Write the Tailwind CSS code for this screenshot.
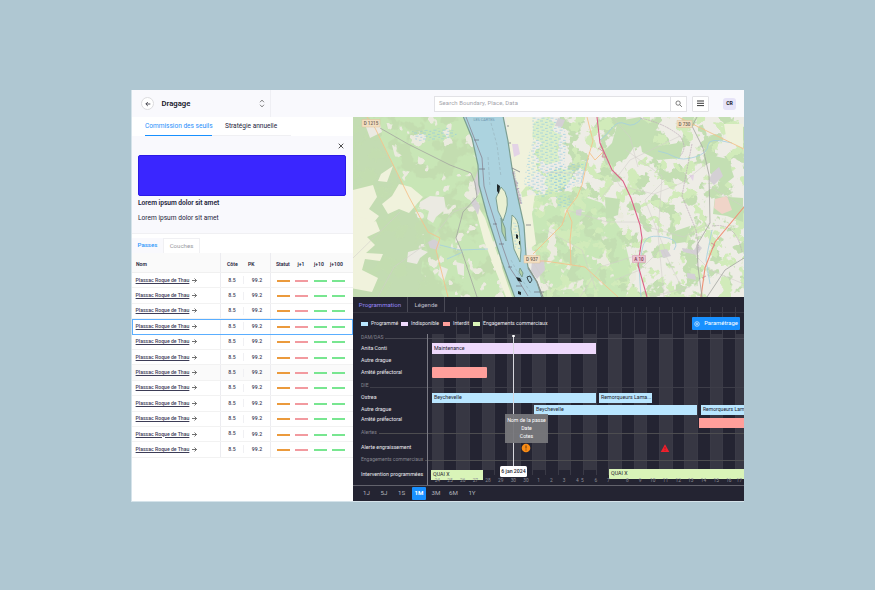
<!DOCTYPE html>
<html lang="fr">
<head>
<meta charset="utf-8">
<title>Dragage</title>
<script src="https://cdn.jsdelivr.net/npm/@tailwindcss/browser@4"></script>
</head>
<body class="w-[875px] h-[590px] overflow-hidden bg-[#afc7d2] pl-[131px] pt-[90px] font-['Roboto','Liberation_Sans',sans-serif] text-[6px] leading-none text-[#23233b]">
<div class="w-[613px] h-[412px] flex flex-col bg-white border-l border-b border-[#d5e3ea] overflow-hidden whitespace-nowrap">
  <header class="h-[27px] shrink-0 bg-[#f9f9fd] flex items-center">
    <div class="w-[139px] h-full flex items-center border-r border-[#efeff4] pl-[9px]">
      <div class="size-[13px] rounded-full border border-[#dcdcdf] bg-white flex items-center justify-center">
        <svg class="size-[6px]" viewBox="0 0 7 7" fill="none" stroke="#33333f" stroke-width="1"><path d="M6.2 3.5H1M3.3 1.2 1 3.5l2.3 2.3"/></svg>
      </div>
      <h1 class="ml-[7.5px] text-[7.7px] font-semibold text-[#17172b]">Dragage</h1>
      <svg class="ml-auto mr-[5px] w-[6px] h-[9px]" viewBox="0 0 6 10" fill="none" stroke="#666" stroke-width="0.9"><path d="M.8 3.6 3 1.2l2.2 2.4M.8 6.4 3 8.8l2.2-2.4"/></svg>
    </div>
    <div class="ml-[163px] w-[253px] h-[16px] flex border border-[#e2e2e6] bg-white items-center">
      <span class="flex-1 pl-[4px] text-[5.9px] text-[#a3a3aa] tracking-[0.1px]">Search Boundary, Place, Data</span>
      <div class="w-[16px] h-full border-l border-[#e2e2e6] flex items-center justify-center">
        <svg class="size-[7.5px]" viewBox="0 0 8 8" fill="none" stroke="#555" stroke-width="0.8"><circle cx="3.3" cy="3.3" r="2.3"/><path d="m5 5 2.4 2.4"/></svg>
      </div>
    </div>
    <div class="ml-[5px] w-[17px] h-[16px] border border-[#e2e2e6] rounded-[1px] bg-white flex items-center justify-center">
      <svg class="w-[7px] h-[7px]" viewBox="0 0 7 7" stroke="#222" stroke-width="0.9"><path d="M0 1h7M0 3.3h7M0 5.6h7"/></svg>
    </div>
    <div class="ml-[14px] w-[13px] h-[12px] rounded-[3px] bg-[#e6e3f8] flex items-center justify-center text-[5.2px] font-bold text-[#17172b]">CR</div>
  </header>

  <div class="flex flex-1 min-h-0">
    <aside class="w-[221px] shrink-0 flex flex-col">
      <nav class="h-[19px] shrink-0 flex pl-[13px] text-[6.55px]">
        <div class="w-[67px] border-b border-[#1890ff] text-[#1f8ffb] flex items-center">Commission des seuils</div>
        <div class="w-[79px] pl-[13px] border-b border-[#f0f0f3] flex items-center">Stratégie annuelle</div>
      </nav>
      <section class="h-[98px] shrink-0 bg-[#f9f9fd] px-[6px] pt-[7px] border-b border-[#f0f0f3]">
        <div class="flex justify-end pr-[3px]">
          <svg class="size-[6px]" viewBox="0 0 6 6" stroke="#222" stroke-width="0.8"><path d="m.7.7 4.6 4.6M5.3.7.7 5.3"/></svg>
        </div>
        <div class="mt-[6px] w-[208px] h-[41px] rounded-[2px] bg-[#3a26ff] border border-[#2b19e6]"></div>
        <p class="mt-[4px] text-[6.7px] font-semibold tracking-[-0.05px]">Lorem ipsum dolor sit amet</p>
        <p class="mt-[8px] text-[6.6px]">Lorem ipsum dolor sit amet</p>
      </section>
      <nav class="mt-[4px] h-[15px] shrink-0 flex text-[6.1px]">
        <div class="w-[31px] bg-[#f9f9fd] flex items-center justify-center font-medium text-[#2c97fb]">Passes</div>
        <div class="w-[37px] border border-b-0 border-[#f0f0f3] flex items-center justify-center text-[#98989e]">Couches</div>
      </nav>
      <div class="h-[20px] shrink-0 flex bg-[#fafafa] border-b border-[#f0f0f0] text-[5.1px] font-semibold">
        <div class="w-[89px] border-r border-[#ececf0] pl-[4px] pt-[9px]">Nom</div>
        <div class="w-[50px] border-r border-[#ececf0] flex pt-[9px]"><span class="w-[22px] pl-[6px]">Côte</span><span class="pl-[5px]">PK</span></div>
        <div class="flex-1 flex pt-[9px] pl-[5px]"><span class="w-[21.5px]">Statut</span><span class="w-[16.5px]">j+1</span><span class="w-[16px]">j+10</span><span>j+100</span></div>
      </div>
      <div id="rows"></div>
    </aside>

    <main class="flex-1 flex flex-col min-w-0">
      <svg class="w-full h-[180px] shrink-0 block" viewBox="353 117 391 180" preserveAspectRatio="none" fill="none">
        <defs>
          <filter id="westwood" x="0" y="0" width="100%" height="100%" color-interpolation-filters="sRGB"><feTurbulence type="fractalNoise" baseFrequency="0.05" numOctaves="4" seed="12"/><feColorMatrix values="0 0 0 0 .765  0 0 0 0 .867  0 0 0 0 .69  14 0 0 0 -7.300"/><feComposite in2="SourceGraphic" operator="in"/></filter>
          <filter id="forest" x="0" y="0" width="100%" height="100%" color-interpolation-filters="sRGB"><feTurbulence type="fractalNoise" baseFrequency="0.06" numOctaves="4" seed="7"/><feColorMatrix values="0 0 0 0 .765  0 0 0 0 .87  0 0 0 0 .70  20 0 0 0 -10.900"/><feComposite in2="SourceGraphic" operator="in"/></filter>
          <filter id="meadow" x="0" y="0" width="100%" height="100%" color-interpolation-filters="sRGB"><feTurbulence type="fractalNoise" baseFrequency="0.075" numOctaves="4" seed="21"/><feColorMatrix values="0 0 0 0 .82  0 0 0 0 .92  0 0 0 0 .73  20 0 0 0 -11.400"/><feComposite in2="SourceGraphic" operator="in"/></filter>
          <filter id="clearing" x="0" y="0" width="100%" height="100%" color-interpolation-filters="sRGB"><feTurbulence type="fractalNoise" baseFrequency="0.075" numOctaves="3" seed="4"/><feColorMatrix values="0 0 0 0 .92  0 0 0 0 .92  0 0 0 0 .875  20 0 0 0 -12.600"/><feComposite in2="SourceGraphic" operator="in"/></filter>
          <pattern id="marsh" width="9" height="6" patternUnits="userSpaceOnUse"><path d="M0 1h3M5 2.4h2.6M1.5 4.2h3M6.3 5.3h2" stroke="#8cc6e2" stroke-width=".6"/></pattern>
        </defs>
        <path fill="#eeede6" d="M353 117h391v180H353z"/>
        <path fill="#c8e6b6" d="M353 117h115l14 60 34 120H353z"/>
        <path fill="#c3dcb2" d="M353 117h16l40 80 16 36-4 40 24 24h-92z"/>
        <path fill="#c8e7b7" d="m526 197 42-6 34 12 20 28 10 40-6 26h-83z"/>
        <path filter="url(#westwood)" fill="#000" d="M353 117h115l14 60 34 120H353z"/>
        <path filter="url(#forest)" fill="#000" d="M560 117h184v180H540l-10-60 20-20z"/>
        <path filter="url(#meadow)" fill="#000" d="M506 117h238v180H541l-15-80z"/>
        <path filter="url(#clearing)" fill="#000" d="M385 117h83l14 60 34 120H430z"/>
        <path filter="url(#clearing)" fill="#000" d="M526 197h110v100h-94z"/>
        <g fill="#c3dfb3">
          <path d="m618 121 22-4 16 12-4 14-18 4-8 12-20 6-4-12 10-10zM710 155l18 4 6 18-10 8-14-12zM605 197l15 2-2 16-12 4zM715 196l28 2v24l-16-6-14-2z"/>
          <path d="m640 140 20 6 24-4-4 16-22 2-16-8zM672 232l18-6-4 16-14 2z"/>
        </g>
        <g fill="#f0f2dc">
          <path d="m353 190 20-5 4 12-8 12 10 7-8 10-18 4z"/>
          <path d="m353 215 14 4-6 8 15-6 4 10-13 6 8 8-9 8 17 1-3 7-15-2-3 11 16 8-6 14-21-4z"/>
          <path d="m381 174 12-8-6 16-9-1zM399 184l12 3 12 10-14 16-10-4-11 5-6-10 10-8z"/>
          <path d="m506 117 28 0 6 12-8 20 6 22-14 18-5 6-8-30zM519 198l16-4-3 20 4 30-8 6z"/>
          <path d="m472 196 13 22 27 79h-6l-22-56z"/>
          <path d="M724 124h19v24l-16-6zM500 253l-9 8 6 12 7 14z"/>
        </g>
        <g fill="#ebeae2">
          <path d="m420 202 10-6 14 1 2 12-10 8-3 6-6-4 2-8-10-4zM408 252l12-3 8 3-8 6-3 6-10-2zM440 266l8 3-4 12-6-6zM456 262l8 2 0 12-6-2zM366 127l14-3 2 8-12 6z"/>
        </g>
        <g fill="#dcefca">
          <path d="m534 122 10-5 12 6-4 8 10 4-6 12 4 14-14 4-8-10 4-12-10-6zM548 172l12-3 14 1-6 14-14 8-10-8z"/>
        </g>
        <g fill="url(#marsh)">
          <path d="m532 117 28 0 7 20-3 30 4 22-28 9-16-14 3-24 6-20z"/>
          <path d="m546 170 18-5 20-2-3 20-24 9zM412 131l35-3 12 5-10 6-33 2z"/>
          <path d="m556 196 12-2 5 12-15 2z"/>
        </g>
        <g fill="#d4d0d5">
          <path d="m428 242 6-3 6 4-2 7-8-2zM712 173l7-6 4 9-9 9-5-5zM532 261l12-1 1 10-8 9-6-8zM660 250l7-1 4 7-8 2zM682 248l12 2 4-6 4 4-5 7-14-3zM558 118l7 2-3 7-7-1zM478 170l3 20-4 6-3-14zM474 197l6 9-2 9-7-12zM687 273l8 1 1 6-9-2zM576 210l6-1-1 7-5-1z"/>
        </g>
        <path fill="#e3d3e6" d="m512 144 6 0 2 10-6 3zM689 175l5 0-1 6z"/>
        <path fill="#f0d4c8" d="m715 199 12-3 5 14-10 4-8-6z"/>
        <g stroke="#d2cdca" stroke-width=".55">
          <path d="M353 258 400 212M378 297l16-30 35-25 24-30 25-9M604 158l16 28 34 8 30-12 24-20M626 150l36 26-4 58 6 63M545 172l40 2M612 117l18 20 8 30M640 225l44 12 26-14M660 250l-20 20-25 10M546 230l36 20 14 40M580 297l20-30 38-12M663 250l20 40M710 187l34 20M650 297l40-10M567 210l40 12 34 0M600 200l30-40 50-24M665 180l-20 20 20 50M533 262l18 30M690 250l20 20 34 14"/>
        </g>
        <g stroke="#a3cfdf" stroke-width=".8">
          <path d="M600 140q6-4 12-12t14-4 16-6M658 151q10 2 17 6t20 0 13-12 24-2M642 250q2-11 8-13t18 1 6 12M581 183l6-24M440 245l20 5 28-1M447 259l16-7M641 297l-2-30 3-17M712 230l-6 30 4 24"/>
        </g>
        <g stroke="#bdadb9" stroke-width=".7" stroke-dasharray="2 .6">
          <path d="M640 118q24 5 40 18 8 12 0 20M692 144l-6 30-4 22 14 34 3 20M712 226q24-4 30 26"/>
        </g>
        <g stroke="#f5c28c" stroke-width=".9">
          <path d="m367 117 8 11 34 69 19 35 12 6-4 12 12 47M587 117l6 24-5 17-6 27-5 12-10 13-5 15-17 17-12 12M567 210l5 12-2 18 1 25M530 261h15l27 4 13 2 33 30M589 152l6 8 8-8M678 117l66 32"/>
        </g>
        <path stroke="#ef9076" stroke-width="1.100" d="m744 207-29 35-10 26-4 29"/>
        <path stroke="#dc6188" stroke-width="1.100" d="m597 117 3 26 12 27 11 11 8 17 9 27 2 13-4 27 9 32"/>
        <path stroke="#d07890" stroke-width=".7" d="m598 148 6 4-2 5 5 0M711 243l4 2-3 4M702 278l4-2"/>
        <g stroke="#a3a49f" stroke-width=".8">
          <path d="m380 128 28 16 42 21 21 8 4 10 2 14-14 15-7 26 6 14 15 45"/>
          <path d="m697 117-5 9 11 22 6 27 1 48-13 22 1 22 4 30M744 258l-19 12-18 27"/>
        </g>
        <path fill="#acd3df" stroke="#7c9f90" stroke-width="1.200" d="m463 116 9 22 6 27 1 20 8 30 15 47 13 36h27l-5-16-9-15-2-12-2-30-6-27-6-30-4-27-5-25z"/>
        <g fill="#e9f0d3" stroke="#7c9f90" stroke-width="1">
          <path d="M501 187q5 4 6 11t-1 14l-3 9-5-10-2-13z"/>
          <path d="M512 215q6 4 7 14t2 21l-1 12-6-13-3-20z"/>
          <path fill="#b3d2a8" d="m501 218 4 10 1 13-4-9z"/>
          <path fill="#b3d2a8" d="m520 268 3 5-1 4-3-5z"/>
        </g>
        <path fill="url(#marsh)" d="m512 222 7 2 1 26-5-2z"/>
        <path stroke="#8a8793" stroke-width=".8" d="m466 117 16 41 2 28 4 14 8 25 6 20 8 23 10 15 8 13"/>
        <path stroke="#9ab6c0" stroke-width=".7" stroke-dasharray="3 2" d="m491 123 6 22 4 32M488 157l2 30M511 260l8 15 12 18"/>
        <path stroke="#6a6e7a" stroke-width=".7" d="M474 140h5M479 169h6M493 224h4M499 244h5M508 267h4M516 286h6M534 292h10M507 126h2M509 143h2M526 225h5M512 168l8 4"/>
        <path stroke="#8b918d" stroke-width="1.200" d="m528 268 9 14 6 15"/>
        <g fill="#20282a"><path d="m497 184 3 2-1 8-2-3zM516 234l2 1v4l-2-1zM519 241l1 0v4l-1-1zM516 277l4 1 2 4-4-1zM518 291l3 1 0 3-3-1z"/></g>
        <path stroke="#20282a" stroke-width=".8" d="m527 277 3-1 2 4-2 3-2-3z"/>
        <g font-family="Roboto, sans-serif" font-size="4.600" font-weight="500" text-anchor="middle" stroke="none">
          <g fill="#f3dfc2" stroke="#dfc09a" stroke-width=".5"><path d="M362 119.500h18v7.500h-18zM677 120.500h15v7h-15zM524 255.500h16v7.500h-16z"/></g>
          <path fill="#ebc4d1" stroke="#d39bb0" stroke-width=".5" d="M632.500 255.500h13v7h-13z"/>
          <text x="371" y="125" fill="#6d6355">D 1215</text>
          <text x="684.500" y="125.700" fill="#6d6355">D 730</text>
          <text x="532" y="261" fill="#6d6355">D 937</text>
          <text x="639" y="260.700" fill="#7c3750">A 10</text>
          <text x="484" y="121" font-size="3.800" font-weight="400" fill="#6e93ad">LES CARTES</text>
          <text transform="translate(516 188) rotate(76)" font-size="4" font-weight="400" fill="#977a9c">Nouvelle-Aquitaine</text>
        </g>
      </svg>

      <section class="relative isolate flex-1 flex flex-col bg-[#242432] text-[#e9e9ee] text-[5.3px]">
        <div id="grid" class="absolute -z-10 left-[78px] top-[10px] right-0 h-[168px] flex overflow-hidden"></div>
        <div class="h-[16px] shrink-0 flex border-b border-[#373743] text-[6.1px]">
          <div class="w-[55px] pt-px border-r border-[#4a4a56] bg-[#242432] flex items-center justify-center text-[#9585f5]">Programmation</div>
          <div class="w-[37px] pt-px border-r border-[#4a4a56] bg-[#242432] flex items-center justify-center text-[#bdbdc6]">Légende</div>
        </div>
        <div class="h-[21px] shrink-0 flex items-center pl-[8px] text-[5.2px]">
          <i class="w-[7px] h-[4px] bg-[#b9e6ff]"></i><span class="w-[30px] ml-[3px]">Programmé</span>
          <i class="w-[7px] h-[4px] bg-[#eed9fc]"></i><span class="w-[32px] ml-[3px]">Indisponible</span>
          <i class="w-[7px] h-[4px] bg-[#ff9f9b]"></i><span class="w-[20px] ml-[3px]">Interdit</span>
          <i class="w-[7px] h-[4px] bg-[#d9f4b8]"></i><span class="ml-[3px]">Engagements commerciaux</span>
          <button class="ml-auto mr-[4px] w-[48px] h-[13px] bg-[#1890ff] rounded-[1px] flex items-center justify-center gap-[4px] text-[5.900px] text-white">
            <svg class="size-[6px]" viewBox="0 0 6 6" fill="none" stroke="#fff" stroke-width=".6"><circle cx="3" cy="3" r="2.300"/><circle cx="3" cy="3" r=".8"/></svg>Paramétrage
          </button>
        </div>

        <div class="flex-1 flex flex-col min-h-0">
          <div class="h-[8px] shrink-0 -mt-px mb-px flex items-center pl-[8px] text-[#85858f] text-[5px] gap-[2px]">DAM/DAS<i class="flex-1 h-px mt-[3px] bg-[#474752]"></i></div>
          <div class="h-[13px] shrink-0 flex items-center"><span class="w-[79px] shrink-0 pl-[8px]">Anita Conti</span><div class="w-[164px] h-[11px] bg-[#eed9fc] text-[#22222e] pl-[2px] flex items-center">Maintenance</div></div>
          <div class="h-[11px] shrink-0 flex items-center"><span class="w-[79px] shrink-0 pl-[8px]">Autre drague</span></div>
          <div class="h-[13px] shrink-0 flex items-center"><span class="w-[79px] shrink-0 pl-[8px]">Arrêté préfectoral</span><div class="w-[55px] h-[11px] bg-[#ff9f9b] rounded-[1px]"></div></div>
          <div class="h-[12px] shrink-0 flex items-center pl-[8px] text-[#85858f] text-[5px] gap-[2px]">DIE<i class="flex-1 h-px mt-[4px] bg-[#3d3d48]"></i></div>
          <div class="h-[13px] shrink-0 flex items-center"><span class="w-[79px] shrink-0 pl-[8px]">Ostrea</span><div class="w-[164px] h-[10px] bg-[#b9e6ff] text-[#22222e] pl-[2px] flex items-center">Beychevelle</div><div class="ml-[3px] w-[53px] h-[10px] bg-[#b9e6ff] text-[#22222e] pl-[2px] flex items-center">Remorqueurs Lama...</div></div>
          <div class="h-[11px] shrink-0 flex items-center"><span class="w-[181px] shrink-0 pl-[8px]">Autre drague</span><div class="w-[163px] shrink-0 h-[10px] bg-[#b9e6ff] text-[#22222e] pl-[2px] flex items-center">Beychevelle</div><div class="ml-[4px] flex-1 min-w-0 h-[10px] bg-[#b9e6ff] text-[#22222e] pl-[2px] flex items-center text-[5.050px]">Remorqueurs Lam</div></div>
          <div class="h-[13px] shrink-0 flex items-end"><span class="w-[346px] shrink-0 pl-[8px] pb-[6px]">Arrêté préfectoral</span><div class="flex-1 h-[10px] bg-[#ff9f9b]"></div></div>
          <div class="h-[8px] shrink-0 flex items-center pl-[8px] text-[#85858f] text-[5px] gap-[2px]">Alertes<i class="flex-1 h-px mt-[3px] bg-[#4d4d50]"></i></div>
          <div class="h-[17px] shrink-0 flex items-end"><span class="w-[168px] shrink-0 pl-[8px] pb-[3px]">Alerte engraissement</span>
            <svg class="w-[10px] h-[10px]" viewBox="0 0 10 10"><circle cx="5" cy="5" r="4.300" fill="#fa8c16"/><path d="M5 2.500v3M5 6.500v1" stroke="#5a3510" stroke-width=".9"/></svg>
            <svg class="ml-[129px] w-[10px] h-[10px]" viewBox="0 0 10 10"><path d="M5 1.200 9.300 9H.7z" fill="#f0202c"/><path d="M5 4v2.300M5 7v.8" stroke="#8c1420" stroke-width=".7"/></svg>
          </div>
          <div class="h-[8px] shrink-0 mt-[2px] flex items-center pl-[8px] text-[#85858f] text-[5px] gap-[2px]">Engagements commerciaux<i class="flex-1 h-px mt-[2px] bg-[#4d4d50]"></i></div>
          <div class="h-[17px] shrink-0 flex items-end"><span class="w-[78px] shrink-0 pl-[8px] pb-[3px]">Intervention programmées</span><div class="w-[52px] h-[10px] bg-[#d9f4b8] text-[#22222e] pl-[2px] flex items-center">QUAI X</div><div class="ml-[126px] flex-1 h-[10px] mb-[1px] bg-[#d9f4b8] text-[#22222e] pl-[2px] flex items-center">QUAI X</div></div>
          <div id="days" class="h-[5px] shrink-0 -mt-px ml-[78px] flex text-[4.800px] text-[#8c8c96]"></div>
        </div>
        <div class="h-[16px] shrink-0 border-t border-[#62626c] flex items-center text-[6.200px] text-[#b4b4bd]">
          <span class="w-[17px] ml-[5px] text-center">1J</span><span class="w-[18px] text-center">5J</span><span class="w-[17px] text-center">1S</span>
          <span class="w-[14px] ml-[2px] h-[13px] bg-[#1890ff] rounded-[1px] text-white font-bold flex items-center justify-center">1M</span>
          <span class="w-[20px] text-center">3M</span><span class="w-[15px] text-center">6M</span><span class="w-[22px] text-center">1Y</span>
        </div>
        <div class="absolute left-[74px] top-[37px] w-px h-[151px] bg-[#7b7b85]"></div>
        <div class="absolute left-[160px] top-[39px] w-px h-[130px] bg-[#d8d8de]"></div>
        <div class="absolute left-[159px] top-[38px] w-[3px] h-[2px] rounded-[1px] bg-white"></div>
        <div class="absolute left-[152px] top-[117px] w-[43px] h-[29px] bg-[#77777b]/95 flex flex-col items-center justify-center gap-[3px] text-[5.200px] text-white">
          <span>Nom de la passe</span><span>Date</span><span>Cotes</span>
        </div>
        <div class="absolute left-[147px] top-[169px] w-[27px] h-[11px] rounded-[1.500px] bg-white text-[#22222e] text-[5.200px] font-medium flex items-center justify-center">6 jan 2024</div>
      </section>
    </main>
  </div>
</div>
<script>
  const rows = document.getElementById('rows');
  for (let i = 0; i < 12; i++) {
    const state = i === 3 ? 'outline outline-1 -outline-offset-1 outline-[#5aaeff]' : i === 6 ? 'bg-[#fafafa]' : '';
    rows.insertAdjacentHTML('beforeend', `
      <div class="h-[15.4px] flex border-b border-[#f2f2f2] ${state}">
        <div class="w-[89px] border-r border-[#ececf0] pl-[3.600px] flex items-center text-[5.150px] font-medium text-[#3c3c56]">
          <span class="underline decoration-[0.5px] underline-offset-1">Plassac Roque de Thau</span>
          <svg class="ml-[2.500px] size-[5px]" viewBox="0 0 5 5" fill="none" stroke="#333" stroke-width=".7"><path d="M0 2.500h4.400M2.500.5l2 2-2 2"/></svg>
        </div>
        <div class="w-[50px] border-r border-[#ececf0] flex items-center text-[5.200px] font-medium text-[#3c3c56]">
          <span class="w-[23px] h-[8px] flex items-center justify-center border-r border-[#f0f0f3]">8.5</span><span class="w-[26px] text-center">99.2</span>
        </div>
        <div class="flex-1 flex items-center gap-[5.300px] pl-[6px] pt-px">
          <i class="w-[13px] h-[2px] bg-[#eb9a3c]"></i><i class="w-[13px] h-[2px] bg-[#f29a9f]"></i><i class="w-[13px] h-[2px] bg-[#78e690]"></i><i class="w-[13px] h-[2px] bg-[#78e690]"></i>
        </div>
      </div>`);
  }
  const grid = document.getElementById('grid');
  for (let i = 0; i < 25; i++) {
    const line = i < 2 ? 'border-transparent' : 'border-[#3a3a46]';
    const fill = i % 2 === 0 ? 'bg-[#373743]' : '';
    grid.insertAdjacentHTML('beforeend', `<div class="w-[12.68px] shrink-0 border-l ${line} pt-[27px]"><div class="h-[136px] ${fill}"></div></div>`);
  }
  const days = document.getElementById('days');
  const labels = [24,25,26,27,28,29,30,30,1,2,3,'4  5',6,7,8,9,10,11,12,13,14,15,16,17];
  labels.forEach((d) => {
    const size = d === '4  5' ? 'w-[19px]' : d === 17 ? 'w-[8px]' : 'w-[12.68px]';
    const gap = d === 8 ? 'ml-[6.4px]' : '';
    days.insertAdjacentHTML('beforeend', `<span class="${size} ${gap} shrink-0 text-center whitespace-pre">${d}</span>`);
  });
</script>
</body>
</html>
